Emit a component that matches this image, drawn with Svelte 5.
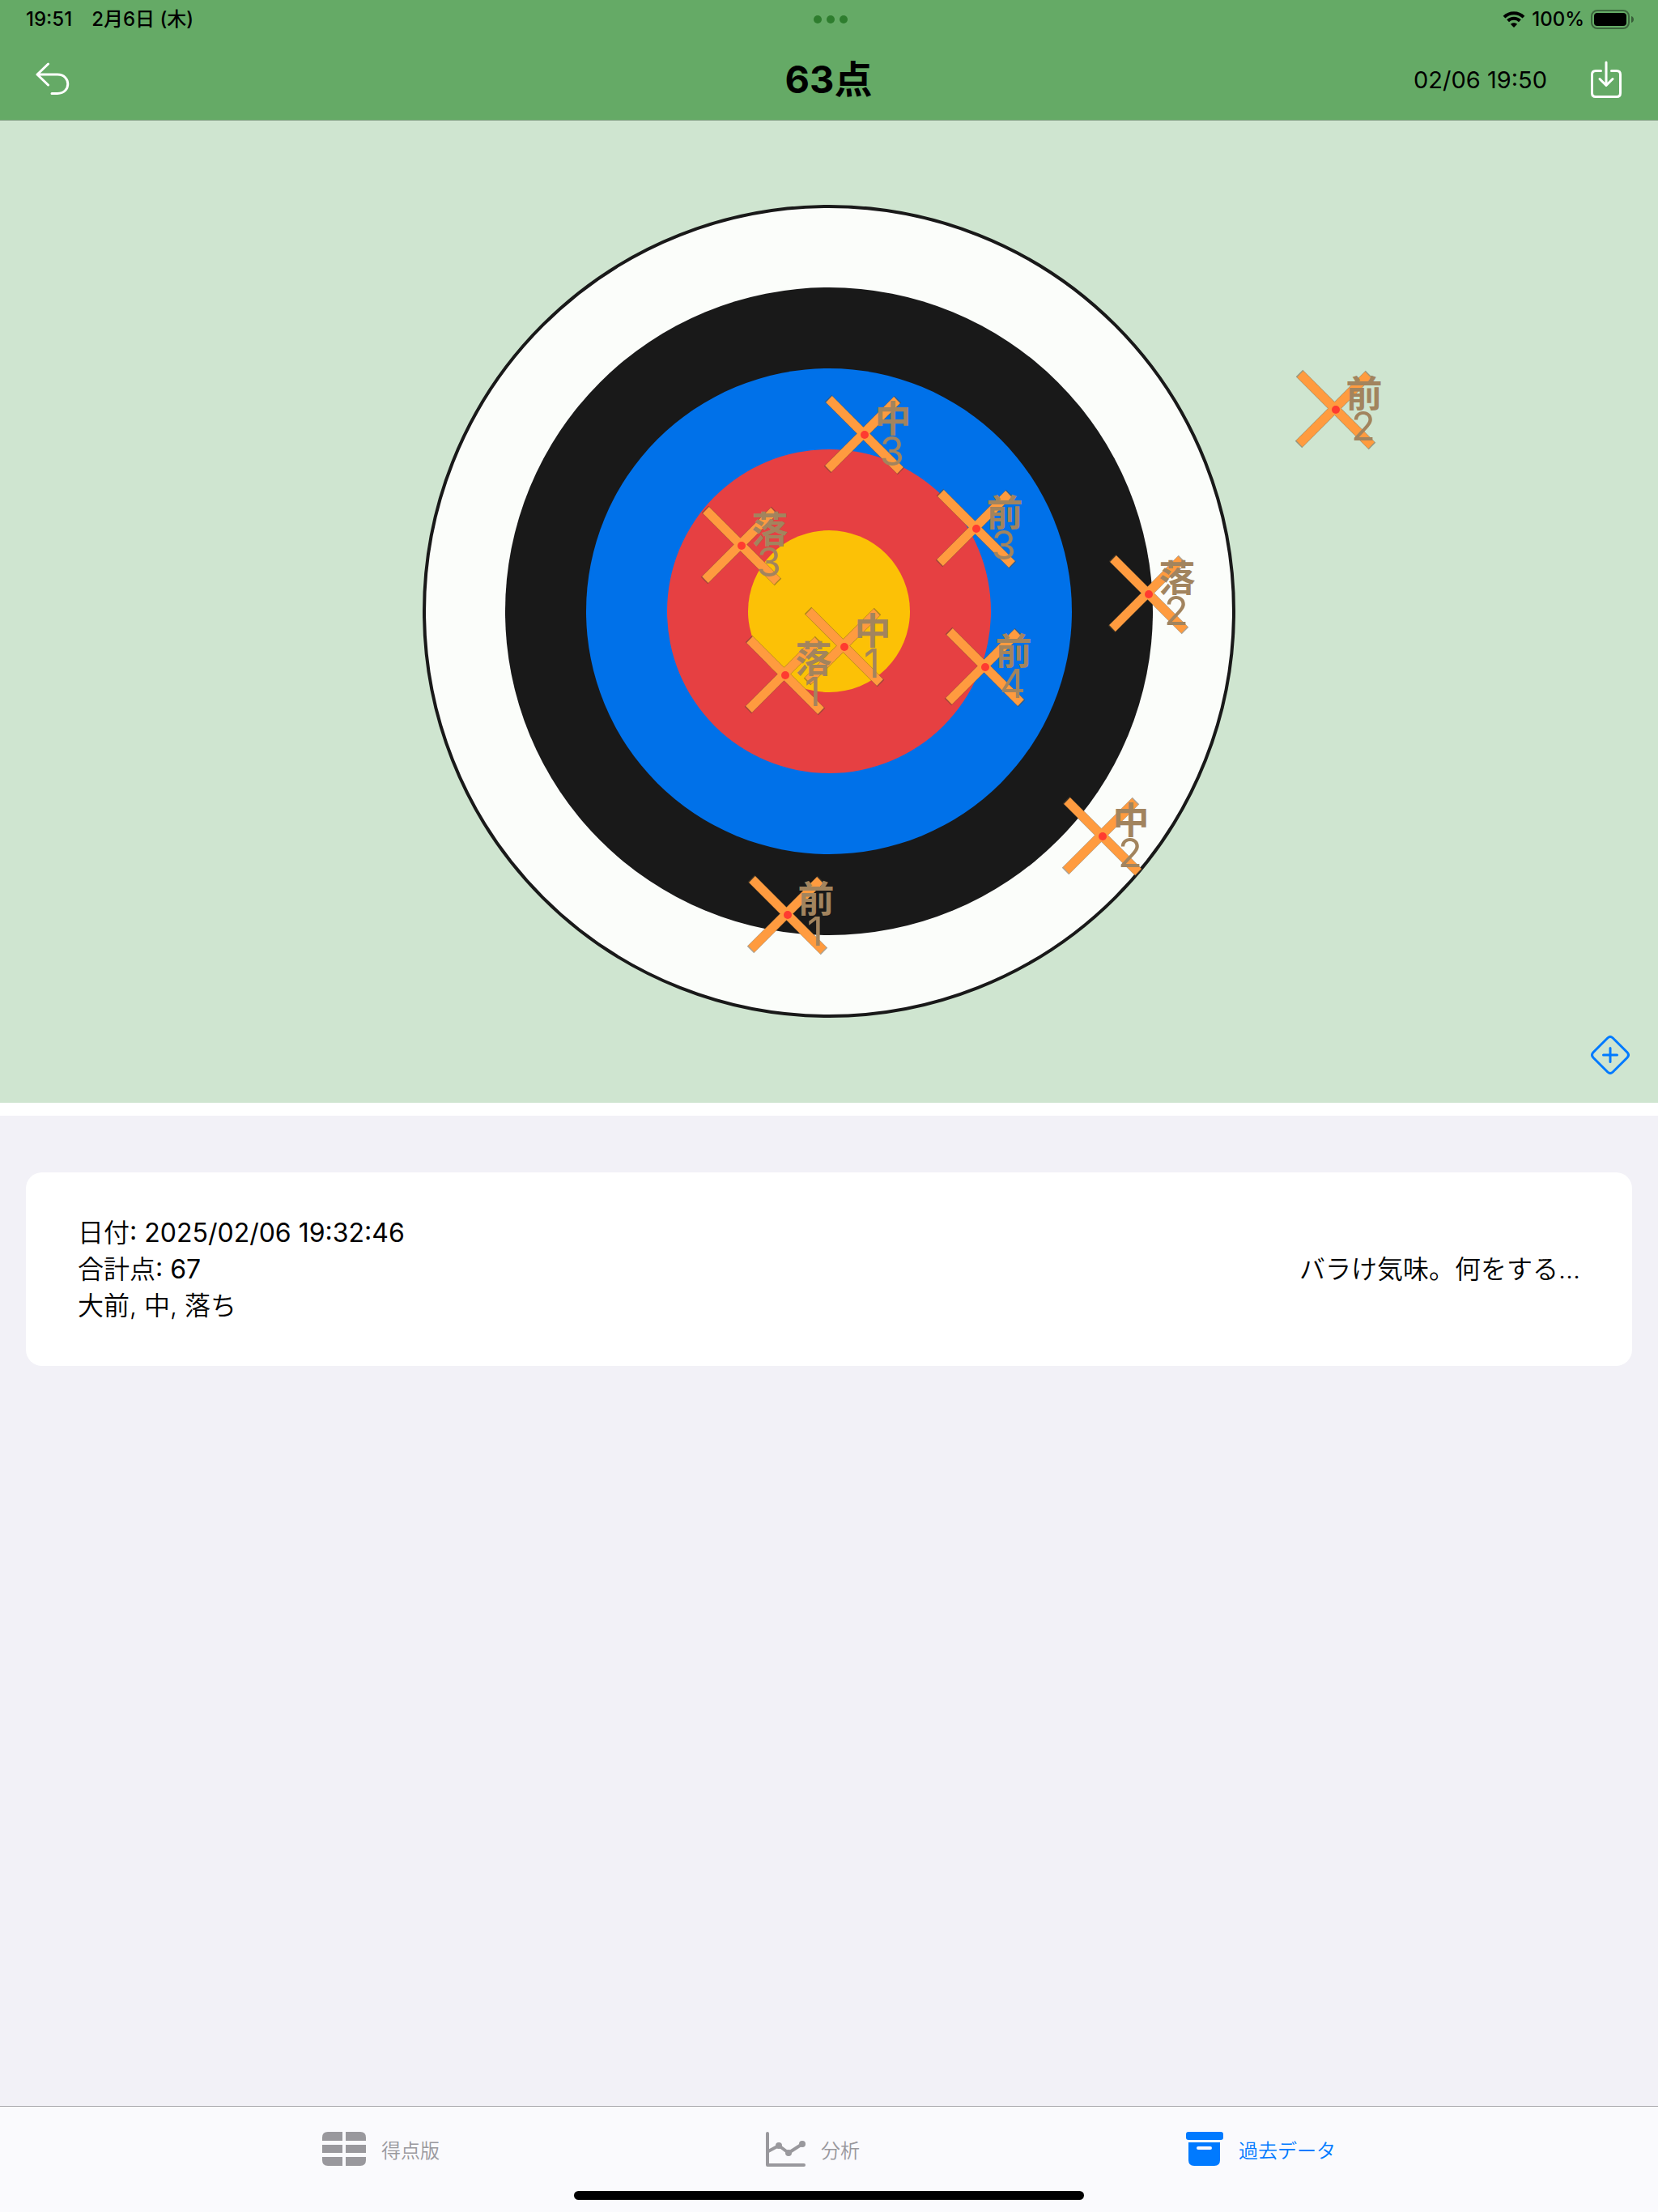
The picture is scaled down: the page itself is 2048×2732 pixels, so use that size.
<script>
  const rings = [
    { r: 400, fill: '#191919' },
    { r: 300, fill: '#0071e9' },
    { r: 200, fill: '#e64042' },
    { r: 100, fill: '#fcc106' }
  ];

  // Arrow hits, measured from the centre of the target.
  const hits = [
    { who: '前', n: 1, x: -51, y: 375 },
    { who: '前', n: 2, x: 626, y: -249 },
    { who: '前', n: 3, x: 182, y: -102 },
    { who: '前', n: 4, x: 193, y: 69 },
    { who: '中', n: 1, x: 19, y: 44 },
    { who: '中', n: 2, x: 338, y: 278 },
    { who: '中', n: 3, x: 44, y: -218 },
    { who: '落', n: 1, x: -54, y: 79 },
    { who: '落', n: 2, x: 395, y: -21 },
    { who: '落', n: 3, x: -108, y: -81 }
  ];

  let active = $state('past');
</script>

<div class="app">
  <header>
    <div class="status">
      <div class="side">
        <span>19:51</span>
        <span>2月6日 (木)</span>
      </div>
      <svg class="dots" viewBox="0 0 42 10" aria-hidden="true">
        <circle cx="5" cy="5" r="5" /><circle cx="21" cy="5" r="5" /><circle cx="37" cy="5" r="5" />
      </svg>
      <div class="side end">
        <svg class="wifi" viewBox="0 0 28 20" aria-hidden="true">
          <path d="M2 7.2C8.600 .6 19.400 .6 26 7.200" />
          <path d="M6.600 11.800C10.700 7.800 17.300 7.800 21.400 11.800" />
          <path class="solid" d="M14 20L9.800 15.800C12.100 13.700 15.900 13.700 18.200 15.800Z" />
        </svg>
        <span>100%</span>
        <svg class="battery" viewBox="0 0 54 24" aria-hidden="true">
          <rect class="shell" x="1" y="1" width="46" height="22" rx="7" />
          <rect x="4" y="4" width="40" height="16" rx="4" />
          <path class="cap" d="M50 8C54 9 54 15 50 16Z" />
        </svg>
      </div>
    </div>
    <div class="nav">
      <div class="side">
        <button aria-label="戻る">
          <svg class="back" viewBox="0 0 42 42" aria-hidden="true">
            <path d="M15.500 2L2 15L15.500 28M2 15H27C44 15 44 38.500 27 38.500H20" />
          </svg>
        </button>
      </div>
      <h1>63点</h1>
      <div class="side end">
        <time>02/06 19:50</time>
        <button aria-label="保存">
          <svg class="save" viewBox="0 0 38 46" aria-hidden="true">
            <path d="M12.500 12.500H6Q1.500 12.500 1.500 17V40Q1.500 44.500 6 44.500H32Q36.500 44.500 36.500 40V17Q36.500 12.500 32 12.500H25.500" />
            <path d="M19 2V30M11 22.500L19 30.500L27 22.500" />
          </svg>
        </button>
      </div>
    </div>
  </header>

  <section class="board">
    <svg class="target" viewBox="-1024 -606 2048 1213" role="img" aria-label="的">
      <circle r="500" class="outer" />
      {#each rings as ring}
        <circle r={ring.r} fill={ring.fill} />
      {/each}
      {#each hits as hit}
        <g transform="translate({hit.x} {hit.y})">
          <path class="edge" d="M-45 -45L45 45M-46 43L41 -44" />
          <path class="cross" d="M-44 -44L44 44M-45 42L40 -43" />
          <circle class="tip" r="5" />
        </g>
      {/each}
      {#each hits as hit}
        <g class="label" transform="translate({hit.x} {hit.y})">
          <text class="who" x="35" y="-3">{hit.who}</text>
          <text class="num" x="34" y="38">{hit.n}</text>
        </g>
      {/each}
    </svg>
    <button class="add" aria-label="追加">
      <svg viewBox="0 0 48 48" aria-hidden="true">
        <path d="M20.800 3Q24 0 27.200 3L45 20.800Q48 24 45 27.200L27.200 45Q24 48 20.800 45L3 27.200Q0 24 3 20.800Z" />
        <path d="M24 15.500V32.500M15.500 24H32.500" />
      </svg>
    </button>
  </section>

  <main>
    <article>
      <div>
        <p><span class="thin">日付</span>: 2025/02/06 19:32:46</p>
        <p><span class="thin">合計点</span>: 67</p>
        <p class="thin">大前, 中, 落ち</p>
      </div>
      <p class="thin">バラけ気味。何をする...</p>
    </article>
  </main>

  <footer>
    <nav>
      <button class:on={active === 'score'} onclick={() => (active = 'score')}>
        <svg class="i-score" viewBox="0 0 54 42" aria-hidden="true">
          <path d="M7 0H25V11H0V7Q0 0 7 0ZM29 0H47Q54 0 54 7V11H29ZM0 16H25V26H0ZM29 16H54V26H29ZM0 31H25V42H7Q0 42 0 35ZM29 31H54V35Q54 42 47 42H29Z" />
        </svg>
        得点版
      </button>
      <button class:on={active === 'stats'} onclick={() => (active = 'stats')}>
        <svg class="i-stats" viewBox="0 0 49 43" aria-hidden="true">
          <path class="line" d="M2 2V41H47" />
          <path class="line" d="M3 24L16 17L28 26L45 15" />
          <circle cx="16" cy="17" r="4" /><circle cx="28" cy="26" r="4" /><circle cx="45" cy="15" r="4" />
        </svg>
        分析
      </button>
      <button class:on={active === 'past'} onclick={() => (active = 'past')}>
        <svg class="i-past" viewBox="0 0 46 42" aria-hidden="true">
          <rect width="46" height="10" rx="3" />
          <path fill-rule="evenodd" d="M3 13H42V35Q42 42 35 42H10Q3 42 3 35ZM15 18Q13 18 13 20T15 22H30Q32 22 32 20T30 18Z" />
        </svg>
        過去データ
      </button>
    </nav>
    <div class="home"></div>
  </footer>
</div>

<style>
  :global(body) {
    margin: 0;
  }
  .app {
    display: flex;
    flex-direction: column;
    min-height: 100vh;
    background: #f2f1f7;
    color: #000;
    font-family: Inter, 'Noto Sans CJK JP', sans-serif;
  }
  button {
    display: flex;
    align-items: center;
    padding: 0;
    border: 0;
    background: none;
    color: inherit;
    font: inherit;
    cursor: pointer;
  }
  svg {
    display: block;
    flex: none;
  }
  p,
  h1 {
    margin: 0;
  }

  header {
    background: #65aa66;
    border-bottom: 1px solid #86a488;
  }
  .status,
  .nav {
    display: grid;
    grid-template-columns: 1fr auto 1fr;
    align-items: center;
  }
  .side {
    display: flex;
    align-items: center;
  }
  .end {
    justify-content: flex-end;
  }
  .status {
    height: 48px;
    padding: 0 29px 0 32px;
    font-size: 24px;
    line-height: 28px;
    font-weight: 500;
  }
  .status .side {
    gap: 24px;
  }
  .status .end {
    gap: 8px;
  }
  .dots {
    width: 42px;
    fill: #2e7d2e;
  }
  .wifi {
    width: 28px;
    fill: none;
    stroke: #000;
    stroke-width: 4;
  }
  .wifi .solid {
    fill: #000;
    stroke: none;
  }
  .battery {
    width: 54px;
  }
  .battery .shell {
    fill: none;
    stroke: #000;
    stroke-opacity: 0.4;
    stroke-width: 2;
  }
  .battery .cap {
    fill-opacity: 0.45;
  }
  .nav {
    height: 100px;
    padding: 0 45px 0 44px;
  }
  h1 {
    font-size: 47px;
    line-height: 60px;
    font-weight: 700;
  }
  time {
    font-size: 29px;
  }
  .nav .end {
    gap: 54px;
  }
  .back,
  .save {
    fill: none;
    stroke: #fff;
    stroke-width: 3;
    stroke-linecap: round;
    stroke-linejoin: round;
  }
  .back {
    width: 42px;
  }
  .save {
    width: 38px;
  }

  .board {
    position: relative;
    background: #cfe5d0;
    border-bottom: 16px solid #fff;
  }
  .target {
    width: 100%;
  }
  .outer {
    fill: #fbfdfa;
    stroke: #191919;
    stroke-width: 4;
  }
  .edge {
    fill: none;
    stroke: #5c4a30;
    stroke-opacity: 0.5;
    stroke-width: 12;
  }
  .cross {
    fill: none;
    stroke: #ff9b3f;
    stroke-width: 11;
  }
  .tip {
    fill: #ff3b30;
  }
  .label {
    fill: #a2845e;
    text-anchor: middle;
  }
  .who {
    font-size: 45px;
    font-weight: 700;
  }
  .num {
    font-size: 49px;
    font-weight: 400;
  }
  .add {
    position: absolute;
    right: 35px;
    bottom: 35px;
  }
  .add svg {
    width: 48px;
    fill: none;
    stroke: #007aff;
    stroke-width: 3;
    stroke-linecap: round;
  }

  main {
    flex: 1;
    padding: 70px 32px;
  }
  article {
    display: flex;
    align-items: center;
    justify-content: space-between;
    padding: 52px 64px;
    border-radius: 20px;
    background: #fff;
    font-size: 32px;
    line-height: 45px;
  }
  .thin {
    font-weight: 350;
  }

  footer {
    border-top: 1px solid #a9a9ae;
    background: #fafafd;
  }
  nav {
    display: flex;
    justify-content: center;
    gap: 403px;
    height: 104px;
  }
  nav button {
    gap: 19px;
    color: #99989d;
    fill: #99989d;
    font-size: 24px;
    font-weight: 350;
    white-space: nowrap;
  }
  nav .on {
    color: #007aff;
    fill: #007aff;
  }
  .i-score {
    width: 54px;
  }
  .i-stats {
    width: 49px;
  }
  .i-past {
    width: 46px;
  }
  .line {
    fill: none;
    stroke: currentColor;
    stroke-width: 4;
    stroke-linecap: round;
    stroke-linejoin: round;
  }
  .home {
    width: 31%;
    max-width: 630px;
    height: 11px;
    margin: 0 auto 15px;
    border-radius: 6px;
    background: #000;
  }
</style>
